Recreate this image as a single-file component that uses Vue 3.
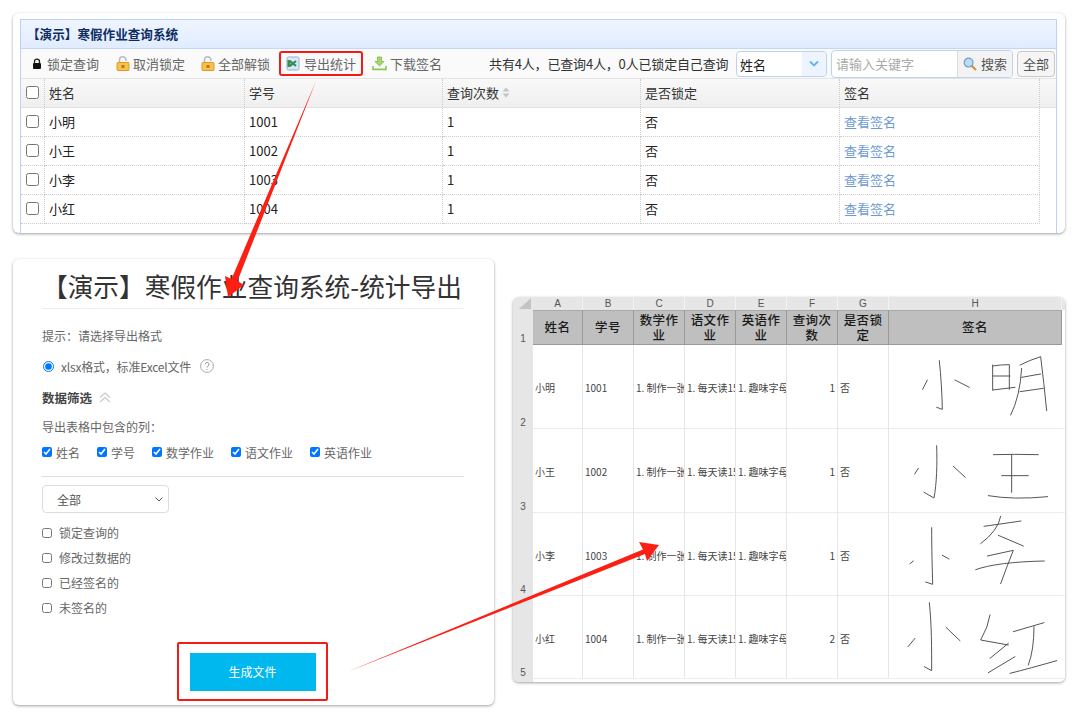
<script setup>
const students = [
  { name: '小明', id: '1001' },
  { name: '小王', id: '1002' },
  { name: '小李', id: '1003' },
  { name: '小红', id: '1004' }
]
const heads = ['姓名', '学号', '数学作业', '语文作业', '英语作业', '查询次数', '是否锁定', '签名']
const letters = ['A', 'B', 'C', 'D', 'E', 'F', 'G', 'H']
const sheet = [
  { name: '小明', id: '1001', n: 1, y: 165, strokes: ['M178 212C183 260 186 310 187 358L170 352', 'M142 270L128 298', 'M225 270L268 292', 'M338 225L338 300', 'M338 228Q360 224 388 224L388 298', 'M338 258L390 258', 'M338 300L405 292', 'M420 225Q450 210 482 200Q492 280 500 362', 'M425 235Q420 320 392 375', 'M425 262L482 252', 'M420 305L490 295'] },
  { name: '小王', id: '1002', n: 1, y: 415, strokes: ['M170 465C172 520 170 580 162 622L132 605', 'M115 533L104 550', 'M220 527L256 560', 'M340 492Q400 490 475 492', 'M395 492L395 605', 'M365 555L445 555', 'M325 615Q400 628 503 618'] },
  { name: '小李', id: '1003', n: 1, y: 665, strokes: ['M155 712C155 780 157 840 158 882L137 875', 'M100 812L90 820', 'M187 795L207 806', 'M312 708L423 692', 'M362 678Q355 720 302 760', 'M355 735L430 767', 'M322 797L400 780Q380 830 362 880', 'M287 838Q350 815 493 812'] },
  { name: '小红', id: '1004', n: 2, y: 915, strokes: ['M148 938C155 1000 155 1080 155 1142L133 1130', 'M105 1045L84 1070', 'M198 1012L240 1052', 'M330 975Q325 1010 302 1050L385 1065', 'M385 1060L330 1105', 'M405 1100L325 1148', 'M400 1025L492 998', 'M462 1010Q462 1080 445 1125', 'M390 1150Q450 1135 530 1112'] }
]
const columns = ['姓名', '学号', '数学作业', '语文作业', '英语作业']
const filters = ['锁定查询的', '修改过数据的', '已经签名的', '未签名的']
</script>

<template>
  <div class="page">
    <section class="card top">
      <div class="panel">
        <div class="title">【演示】寒假作业查询系统</div>
        <div class="toolbar">
          <span class="tool first">
            <svg width="10" height="12" viewBox="0 0 10 12"><path d="M2.5 5V3.6a2.5 2.5 0 0 1 5 0V5" fill="none" stroke="#222" stroke-width="1.3"/><rect x="1" y="5" width="8" height="6" rx="1" fill="#111"/></svg>
            锁定查询
          </span>
          <span class="tool">
            <svg width="14" height="15" viewBox="0 0 14 15"><path d="M3.5 7V4a3.2 3.2 0 0 1 6.4 0v1" fill="none" stroke="#bbb" stroke-width="1.6"/><rect x="1" y="6.5" width="12" height="8" rx="1" fill="#f7c14c" stroke="#dd9a2b"/><rect x="5.5" y="9" width="3" height="3" fill="#b87a1e"/></svg>
            取消锁定
          </span>
          <span class="tool">
            <svg width="14" height="15" viewBox="0 0 14 15"><path d="M3.5 7V4a3.2 3.2 0 0 1 6.4 0v1" fill="none" stroke="#bbb" stroke-width="1.6"/><rect x="1" y="6.5" width="12" height="8" rx="1" fill="#f7c14c" stroke="#dd9a2b"/><rect x="5.5" y="9" width="3" height="3" fill="#b87a1e"/></svg>
            全部解锁
          </span>
          <span class="tool export">
            <svg width="14" height="15" viewBox="0 0 14 15"><rect x="1" y="1" width="12" height="13" rx="1.5" fill="#dbe8f5" stroke="#8fb3d3"/><path d="M4 5l6 5M10 5l-6 5" stroke="#2f8f4e" stroke-width="2.2"/><rect x="1.5" y="4" width="3" height="7" fill="#3c8a58"/></svg>
            导出统计
          </span>
          <span class="tool dl">
            <svg width="15" height="15" viewBox="0 0 15 15"><path d="M5.5 1h4v4.5h2.6L7.5 10 2.9 5.5h2.6z" fill="#a5d66f" stroke="#7dbb45" stroke-width=".8"/><path d="M1 10v3.4h13V10" fill="none" stroke="#8cc653" stroke-width="1.6"/></svg>
            下载签名
          </span>
          <span class="stats">共有4人，已查询4人，0人已锁定自己查询</span>
          <div class="pick">
            <span class="pick-text">姓名</span>
            <span class="pick-arrow"><svg width="10" height="7" viewBox="0 0 10 7"><path d="M1 1.5l4 4 4-4" fill="none" stroke="#62b3ee" stroke-width="1.8"/></svg></span>
          </div>
          <div class="search">
            <span class="keyword">请输入关键字</span>
            <span class="search-btn">
              <svg width="14" height="14" viewBox="0 0 14 14"><path d="M8.6 8.6L13 13" stroke="#d9953a" stroke-width="2.2"/><circle cx="5.6" cy="5.6" r="4.4" fill="#bcdcf5" stroke="#6d9fc8" stroke-width="1.2"/></svg>
              搜索
            </span>
          </div>
          <span class="all-btn">全部</span>
        </div>
        <div class="thead">
          <div class="row-grid head-grid">
            <div class="cell check"><input type="checkbox" /></div>
            <div class="cell">姓名</div>
            <div class="cell">学号</div>
            <div class="cell">查询次数<svg class="sort" width="8" height="11" viewBox="0 0 8 11"><path d="M4 0.5L7.5 4.5H0.5zM4 10.5L0.5 6.5H7.5z" fill="#c4c4c4"/></svg></div>
            <div class="cell">是否锁定</div>
            <div class="cell">签名</div>
          </div>
        </div>
        <div v-for="s in students" :key="s.id" class="row-grid body-grid">
          <div class="cell check"><input type="checkbox" /></div>
          <div class="cell">{{ s.name }}</div>
          <div class="cell">{{ s.id }}</div>
          <div class="cell">1</div>
          <div class="cell">否</div>
          <div class="cell link">查看签名</div>
        </div>
      </div>
    </section>

    <div class="lower">
      <section class="card form">
        <h1 class="form-title">【演示】寒假作业查询系统-统计导出</h1>
        <p class="hint">提示：请选择导出格式</p>
        <label class="radio-line">
          <input type="radio" checked />
          <span class="radio-text">xlsx格式，标准Excel文件</span>
          <svg class="help" width="14" height="14" viewBox="0 0 14 14"><circle cx="7" cy="7" r="6.4" fill="none" stroke="#aaa"/><path d="M5.2 5.4a1.9 1.9 0 1 1 2.7 1.7c-.6.3-.9.7-.9 1.4" fill="none" stroke="#999"/><circle cx="7" cy="10.3" r=".6" fill="#999"/></svg>
        </label>
        <div class="filter-title">
          <b>数据筛选</b>
          <svg width="12" height="11" viewBox="0 0 12 11"><path d="M1 5.5l5-4.5 5 4.5M1 10l5-4.5 5 4.5" fill="none" stroke="#c9c9c9" stroke-width="1.1"/></svg>
        </div>
        <p class="col-label">导出表格中包含的列：</p>
        <div class="col-checks">
          <label v-for="c in columns" :key="c" class="col-check"><input type="checkbox" checked /><span>{{ c }}</span></label>
        </div>
        <div class="divider"></div>
        <div class="all-select">
          <span>全部</span>
          <svg width="8" height="5" viewBox="0 0 8 5"><path d="M.5.5L4 4 7.5.5" fill="none" stroke="#555" stroke-width="1"/></svg>
        </div>
        <label v-for="f in filters" :key="f" class="filter"><input type="checkbox" /><span>{{ f }}</span></label>
        <div class="gen-wrap">
          <div class="gen-box"><button class="gen" type="button">生成文件</button></div>
        </div>
      </section>

      <section class="card sheet">
        <div class="sheet-grid">
          <div class="corner"><svg width="20" height="13" viewBox="0 0 20 13"><path d="M18 1v11H6z" fill="#c4c4c4"/></svg></div>
          <div v-for="l in letters" :key="l" class="col-letter">{{ l }}</div>
          <div class="col-letter filler"></div>

          <div class="row-no">1</div>
          <div v-for="h in heads" :key="h" class="sheet-head">{{ h }}</div>
          <div class="filler-cell"></div>

          <template v-for="(r, i) in sheet" :key="r.id">
            <div class="row-no">{{ i + 2 }}</div>
            <div class="sc">{{ r.name }}</div>
            <div class="sc">{{ r.id }}</div>
            <div class="sc clip">1. 制作一张手抄报</div>
            <div class="sc clip">1. 每天读15分钟</div>
            <div class="sc clip">1. 趣味字母画</div>
            <div class="sc num">{{ r.n }}</div>
            <div class="sc">否</div>
            <div class="sc sign">
              <svg width="173" height="84" :viewBox="`27 ${r.y} 519 252`">
                <path v-for="(d, k) in r.strokes" :key="k" :d="d" fill="none" stroke="#555" stroke-width="3" stroke-linecap="round" stroke-linejoin="round"/>
              </svg>
            </div>
            <div class="filler-cell line"></div>
          </template>
        </div>
      </section>
    </div>

    <svg class="arrows" width="1080" height="720" viewBox="0 0 1080 720">
      <polygon points="316,81 237.5,281 244,285 228,297 225,276 231.5,279" fill="#fb1f14"/>
      <polygon points="347,672 643,549.5 639,542 659,545 647,561 645,554" fill="#fb1f14"/>
    </svg>
  </div>
</template>

<style scoped>
.page {
  position: relative;
  width: 1080px;
  height: 720px;
  box-sizing: border-box;
  padding: 13px 15px 0 13px;
  background: #fff;
  overflow: hidden;
  font-family: "Noto Sans CJK SC", "Noto Sans", sans-serif;
  color: #333;
}
.card {
  background: #fff;
  border-radius: 6px;
  box-shadow: 0 1px 3px rgba(0, 0, 0, 0.38);
  box-sizing: border-box;
}
.top {
  height: 220px;
  padding: 6px 8px 0 7px;
}
.panel {
  height: 214px;
  border: 1px solid #bcd2f2;
  border-bottom: 0;
  box-sizing: border-box;
  font-size: 13px;
}
.title {
  height: 29px;
  line-height: 27px;
  font-weight: 700;
  color: #0e2d5f;
  font-size: 12.6px;
  padding-left: 6px;
  box-sizing: border-box;
  border-bottom: 1px solid #c3d7f3;
  background: linear-gradient(#eff5ff, #e0ecff);
}
.toolbar {
  height: 30px;
  display: flex;
  align-items: center;
  background: #fafafa;
  box-sizing: border-box;
  border-bottom: 1px solid #e4e4e4;
  color: #666;
  white-space: nowrap;
}
.tool {
  display: flex;
  align-items: center;
  gap: 3px;
  margin-left: 16px;
  line-height: 25px;
}
.tool.first {
  margin-left: 11px;
  gap: 5px;
}
.tool.first + .tool {
  margin-left: 17px;
}
.tool.export {
  box-sizing: border-box;
  height: 25px;
  width: 84px;
  margin-left: 9px;
  padding-left: 5px;
  gap: 4px;
  border: 2px solid #f51b14;
  border-radius: 3px;
}
.tool.dl {
  margin-left: 9px;
}
.stats {
  margin-left: 47px;
  width: 239px;
  font-size: 13px;
  color: #333;
  letter-spacing: -0.17px;
}
.pick {
  margin-left: 8px;
  width: 91px;
  height: 26px;
  box-sizing: border-box;
  border: 1px solid #bcd2f2;
  border-radius: 4px;
  background: #fff;
  display: flex;
  overflow: hidden;
}
.pick-text {
  flex: 1;
  padding-left: 3px;
  line-height: 26px;
  color: #222;
}
.pick-arrow {
  width: 24px;
  background: #edf4ff;
  display: flex;
  align-items: center;
  justify-content: center;
}
.search {
  margin-left: 4px;
  width: 182px;
  height: 28px;
  box-sizing: border-box;
  border: 1px solid #bcd2f2;
  border-radius: 4px;
  background: #fff;
  display: flex;
  overflow: hidden;
}
.keyword {
  flex: 1;
  padding-left: 4px;
  line-height: 26px;
  color: #aaa;
}
.search-btn {
  width: 55px;
  box-sizing: border-box;
  display: flex;
  align-items: center;
  gap: 4px;
  padding-left: 5px;
  background: #f3f3f3;
  border-left: 1px solid #dcdcdc;
  color: #555;
}
.all-btn {
  margin-left: 4px;
  width: 38px;
  height: 26px;
  line-height: 24px;
  text-align: center;
  box-sizing: border-box;
  border: 1px solid #c9c9c9;
  border-radius: 4px;
  background: #f5f5f5;
  color: #555;
}
.row-grid {
  display: grid;
  grid-template-columns: 24px 200px 198px 198px 199px 200px;
  width: 1019px;
  height: 29px;
  color: #222;
}
.thead {
  height: 29px;
  background: linear-gradient(#f9f9f9, #efefef);
  box-sizing: border-box;
  border-bottom: 1px solid #e2e2e2;
}
.head-grid {
  height: 28px;
  color: #333;
}
.cell {
  display: flex;
  align-items: center;
  padding-left: 4px;
  padding-bottom: 1px;
  box-sizing: border-box;
  border-right: 1px dotted #ccc;
  border-bottom: 1px dotted #ccc;
}
.head-grid .cell {
  border-bottom: 0;
  padding-bottom: 2px;
}
.check {
  padding-left: 5px;
  border-right: 1px dotted #ccc;
}
.check input {
  margin: 0;
  width: 13px;
  height: 13px;
}
.sort {
  margin-left: 3px;
}
.link {
  color: #6f9bd1;
}

.lower {
  display: flex;
  align-items: flex-start;
  margin-top: 26px;
}
.form {
  width: 481px;
  height: 446px;
  padding: 0 30px 0 29px;
  font-size: 12px;
  color: #666;
}
.form-title {
  margin: 0;
  height: 50px;
  box-sizing: border-box;
  border-bottom: 1px solid #eee;
  font-size: 25.7px;
  line-height: 53px;
  font-weight: 400;
  color: #333;
  white-space: nowrap;
}
.hint {
  margin: 18px 0 0;
  line-height: 18px;
}
.radio-line {
  display: flex;
  align-items: center;
  margin-top: 12px;
  height: 18px;
}
.radio-line input {
  margin: 0 7px 0 1px;
  width: 11px;
  height: 11px;
}
.radio-text {
  letter-spacing: -0.2px;
}
.help {
  margin-left: 9px;
}
.filter-title {
  display: flex;
  align-items: center;
  gap: 7px;
  margin-top: 13px;
  height: 18px;
  font-size: 12.5px;
}
.filter-title b {
  color: #444;
}
.col-label {
  margin: 12px 0 0;
  line-height: 18px;
}
.col-checks {
  display: flex;
  margin-top: 7px;
  height: 18px;
}
.col-check {
  display: flex;
  align-items: center;
  gap: 4px;
  margin-right: 17px;
}
.col-check input,
.filter input {
  margin: 0;
  width: 10px;
  height: 10px;
}
.divider {
  margin-top: 15px;
  border-top: 1px solid #ddd;
}
.all-select {
  margin-top: 8px;
  width: 127px;
  height: 28px;
  box-sizing: border-box;
  border: 1px solid #ddd;
  border-radius: 4px;
  padding: 0 5px 0 14px;
  display: flex;
  align-items: center;
  justify-content: space-between;
  font-size: 12px;
  color: #555;
}
.filter {
  display: flex;
  align-items: center;
  gap: 7px;
  height: 25px;
}
.all-select + .filter {
  margin-top: 7px;
}
.gen-wrap {
  display: flex;
  justify-content: center;
  margin-top: 22px;
}
.gen-box {
  box-sizing: border-box;
  width: 151px;
  height: 59px;
  border: 2px solid #f51b14;
  border-radius: 2px;
  display: flex;
  align-items: center;
  justify-content: center;
  margin-left: -1px;
}
.gen {
  width: 126px;
  height: 38px;
  border: 0;
  padding: 0;
  background: #00b7ee;
  color: #fff;
  font: inherit;
  font-size: 12px;
}

.sheet {
  width: 552px;
  height: 385px;
  margin-left: 19px;
  margin-top: 38px;
  overflow: hidden;
  background: linear-gradient(to right, #e6e6e6 20px, #fff 20px);
}
.sheet-grid {
  display: grid;
  grid-template-columns: 20px 50px 51px 51px 51px 51px 51px 51px 173px 4px;
  grid-template-rows: 13px 35px 84px 84px 83px 83px;
  font-size: 10px;
  color: #444;
}
.corner {
  background: #e6e6e6;
  line-height: 0;
}
.col-letter {
  background: #e6e6e6;
  border-right: 1px solid #f2f2f2;
  box-sizing: border-box;
  text-align: center;
  font-family: "Liberation Sans", sans-serif;
  line-height: 14px;
  color: #555;
}
.row-no {
  background: #e6e6e6;
  display: flex;
  align-items: flex-end;
  justify-content: center;
  padding-bottom: 1px;
  box-sizing: border-box;
  font-family: "Liberation Sans", sans-serif;
  color: #555;
}
.sheet-head {
  background: #bfbfbf;
  box-sizing: border-box;
  border-right: 1px solid #999;
  border-bottom: 1px solid #999;
  border-top: 1px solid #aaa;
  padding-bottom: 2px;
  display: flex;
  align-items: center;
  justify-content: center;
  text-align: center;
  font-size: 12.5px;
  font-weight: 500;
  line-height: 15px;
  color: #1a1a1a;
  letter-spacing: 0.4px;
  overflow: hidden;
}
.filler-cell.line {
  border-bottom: 1px solid #efefef;
}
.sc {
  box-sizing: border-box;
  border-right: 1px solid #e6e6e6;
  border-bottom: 1px solid #ececec;
  display: flex;
  align-items: center;
  padding: 3px 2px 0;
  overflow: hidden;
  white-space: nowrap;
  line-height: 14px;
}
.clip {
  justify-content: flex-start;
}
.num {
  justify-content: flex-end;
}
.sign {
  padding: 0;
  border-right: 0;
}
.sign svg {
  display: block;
}

.arrows {
  position: absolute;
  left: 0;
  top: 0;
  pointer-events: none;
}
</style>
